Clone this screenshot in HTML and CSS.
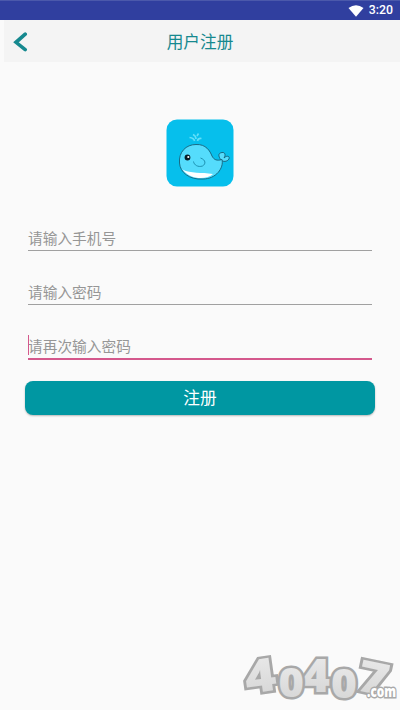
FILE: index.html
```html
<!DOCTYPE html>
<html lang="zh-CN">
<head>
<meta charset="utf-8">
<title>用户注册</title>
<link rel="stylesheet" href="styles.css">
</head>
<body>
<div class="status">
  <svg class="wifi" width="16" height="12" viewBox="0 0 16 12"><path d="M.5 3Q8-2.4 15.5 3L8 11.8Z"/></svg>
  <span class="clock">3:20</span>
</div>
<header class="bar">
  <svg class="back" width="16" height="20" viewBox="0 0 16 20"><path d="M12.2 2.2 3 10.3 12.2 17.6"/></svg>
  <h1 class="title">用户注册</h1>
</header>
<main class="form">
  <svg class="logo" width="68" height="68" viewBox="0 0 68 68">
    <rect x=".5" y=".5" width="67" height="67" rx="10.5" fill="#06bfec"/>
    <g fill="#55dcfc" stroke="#176078" stroke-width=".9" stroke-linejoin="round">
      <path d="M55 41C52 37 52 34 56 33.5C59 33 60 36 58 39C61 36 64 37 63 40C61 43 57 43 55 41Z"/>
      <path d="M13.5 44C12.5 33 20 25.5 30 25.5C40 25 44 32 46 37C48 41 51 42 56 40.5C58 49 50 60 37 60C23 61 14 53 13.5 44Z"/>
    </g>
    <path d="M16.500 50.5C25 55 35 53 47 55C41 61 24 61 16.500 50.5Z" fill="#fff"/>
    <path d="M34.5 39C40 41 40 45 36.5 47C32 48.5 28 46 27.5 42.5" fill="none" stroke="#1689a8" stroke-width=".9"/>
    <circle cx="21.5" cy="38.5" r="2.9" fill="#071d28"/><circle cx="22.3" cy="38" r="1.1" fill="#fff"/>
    <path d="M28.5 22Q28 19 23.5 18.5M30 20Q30 17 27 15.5M31.5 22Q32 19 35.5 19.5M31 17L32.5 14.5" fill="none" stroke="#61dff8" stroke-width="1.6"/>
  </svg>
  <div class="field">请输入手机号</div>
  <div class="field">请输入密码</div>
  <div class="field field-active">请再次输入密码</div>
  <button class="submit">注册</button>
</main>
<svg class="mark" width="168" height="80" viewBox="232 630 168 80">
  <defs><linearGradient id="silver" x2="0" y2="1"><stop offset="0" stop-color="#eee"/><stop offset="1" stop-color="#d2d2d2"/></linearGradient></defs>
  <g class="digits">
    <text transform="translate(247 694) rotate(-8) scale(1.16 1)" font-size="46">4</text>
    <text transform="translate(302 692) scale(1.04 1)" font-size="46">4</text>
    <text transform="translate(355 690) rotate(12) scale(1.2 1)" font-size="44">7</text>
    <text transform="translate(278.5 697) scale(1.06 1)" font-size="41">0</text>
    <text transform="translate(331 698) scale(1.08 1)" font-size="41">0</text>
  </g>
  <text class="domain" x="367" y="697" textLength="29" lengthAdjust="spacingAndGlyphs">.com</text>
</svg>
</body>
</html>
```
FILE: styles.css
```css
* { box-sizing: border-box; }
body {
  margin: 0;
  height: 710px;
  overflow: hidden;
  position: relative;
  background: #fafafa;
  font-family: Roboto, "Noto Sans CJK SC", sans-serif;
}
.status {
  height: 20px;
  display: flex;
  align-items: center;
  justify-content: flex-end;
  gap: 5px;
  padding-right: 7px;
  background: #303f9f;
  border-top: 1px solid #4b59ab;
  color: #fff;
}
.wifi { fill: #fff; }
.clock { font-size: 12.3px; font-weight: 500; line-height: 19px; }
.bar {
  height: 42px;
  margin-left: 4px;
  display: grid;
  grid-template-columns: 32px 1fr 36px;
  align-items: center;
  background: #f4f4f4;
}
.back { margin-left: 9px; fill: none; stroke: #16898f; stroke-width: 3.6; stroke-linecap: round; }
.title { margin: 0; padding-top: 2px; font-size: 16.7px; font-weight: 400; line-height: 42px; text-align: center; color: #16898f; }
.form { display: flex; flex-direction: column; padding: 57px 25px 0; }
.logo { align-self: center; margin-bottom: 38px; }
.field {
  height: 26px;
  margin: 0 3px 28px;
  border-bottom: 1px solid #a0a0a0;
  font-size: 14.7px;
  line-height: 28px;
  color: #969696;
}
.field-active { position: relative; height: 27px; margin-bottom: 21px; border-bottom: 2px solid #d4588c; }
.field-active::before { content: ""; position: absolute; left: 0; top: 2px; width: 1px; height: 20px; background: #d4588c; }
.submit {
  height: 34px;
  padding: 0;
  border: 0;
  border-radius: 8px;
  background: #0097a2;
  box-shadow: 0 1px 2px #0004;
  color: #fff;
  font: 16.7px/36px Roboto, "Noto Sans CJK SC", sans-serif;
}
.mark { position: absolute; left: 232px; top: 630px; font-family: "Open Sans", sans-serif; font-weight: 800; overflow: visible; }
.digits text { fill: url(#silver); stroke: #a8a8a8; stroke-width: 5px; stroke-linejoin: miter; paint-order: stroke; }
.domain { font-size: 15px; fill: #fff; stroke: #aaa; stroke-width: 3px; paint-order: stroke; }
```
